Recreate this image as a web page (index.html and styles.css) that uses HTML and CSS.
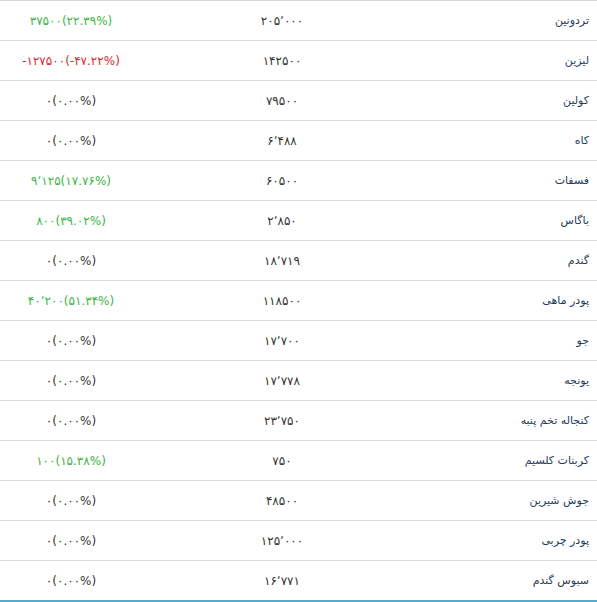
FILE: index.html
```html
<!DOCTYPE html>
<html lang="fa" dir="rtl">
<head>
<meta charset="utf-8">
<link rel="stylesheet" href="styles.css">
</head>
<body>
<table class="prices">
<colgroup><col class="c-name"><col class="c-price"><col class="c-change"></colgroup>
<tbody>
<tr><td class="name">تردونین</td><td class="price">۲۰۵٬۰۰۰</td><td class="change up"><span>۳۷۵۰۰(۲۲.۳۹%)</span></td></tr>
<tr><td class="name">لیزین</td><td class="price">۱۴۲۵۰۰</td><td class="change down"><span>-۱۲۷۵۰۰(-۴۷.۲۲%)</span></td></tr>
<tr><td class="name">کولین</td><td class="price">۷۹۵۰۰</td><td class="change"><span>۰(۰.۰۰%)</span></td></tr>
<tr><td class="name">کاه</td><td class="price">۶٬۴۸۸</td><td class="change"><span>۰(۰.۰۰%)</span></td></tr>
<tr><td class="name">فسفات</td><td class="price">۶۰۵۰۰</td><td class="change up"><span>۹٬۱۲۵(۱۷.۷۶%)</span></td></tr>
<tr><td class="name">باگاس</td><td class="price">۲٬۸۵۰</td><td class="change up"><span>۸۰۰(۳۹.۰۲%)</span></td></tr>
<tr><td class="name">گندم</td><td class="price">۱۸٬۷۱۹</td><td class="change"><span>۰(۰.۰۰%)</span></td></tr>
<tr><td class="name">پودر ماهی</td><td class="price">۱۱۸۵۰۰</td><td class="change up"><span>۴۰٬۲۰۰(۵۱.۳۴%)</span></td></tr>
<tr><td class="name">جو</td><td class="price">۱۷٬۷۰۰</td><td class="change"><span>۰(۰.۰۰%)</span></td></tr>
<tr><td class="name">یونجه</td><td class="price">۱۷٬۷۷۸</td><td class="change"><span>۰(۰.۰۰%)</span></td></tr>
<tr><td class="name">کنجاله تخم پنبه</td><td class="price">۲۳٬۷۵۰</td><td class="change"><span>۰(۰.۰۰%)</span></td></tr>
<tr><td class="name">کربنات کلسیم</td><td class="price">۷۵۰</td><td class="change up"><span>۱۰۰(۱۵.۳۸%)</span></td></tr>
<tr><td class="name">جوش شیرین</td><td class="price">۴۸۵۰۰</td><td class="change"><span>۰(۰.۰۰%)</span></td></tr>
<tr><td class="name">پودر چربی</td><td class="price">۱۲۵٬۰۰۰</td><td class="change"><span>۰(۰.۰۰%)</span></td></tr>
<tr><td class="name">سبوس گندم</td><td class="price">۱۶٬۷۷۱</td><td class="change"><span>۰(۰.۰۰%)</span></td></tr>
</tbody>
</table>
</body>
</html>
```
FILE: styles.css
```css
html, body {
  margin: 0;
  padding: 0;
  background: #ffffff;
}
body {
  font-family: "DejaVu Sans", Tahoma, sans-serif;
  font-size: 11px;
}
.prices {
  width: 597px;
  border-collapse: collapse;
  table-layout: fixed;
  border-top: 1px solid #d6d6d6;
  border-bottom: 2px solid #5aa9c9;
}
.c-name { width: 175px; }
.c-price { width: 280px; }
.c-change { width: 142px; }
.prices td {
  height: 39px;
  padding: 0;
  border-top: 1px solid #dcdcdc;
  vertical-align: middle;
}
.prices tr:first-child td {
  border-top: none;
}
.prices td.name {
  text-align: right;
  padding-right: 8px;
  color: #1e3b5a;
}
.price {
  text-align: center;
  color: #333333;
  font-size: 12px;
  letter-spacing: 1.6px;
}
.change {
  text-align: center;
  color: #333333;
  font-size: 12px;
  letter-spacing: 1.3px;
}
.change span {
  direction: ltr;
  unicode-bidi: embed;
  display: inline-block;
}
.up { color: #3cb543; }
.down { color: #e3262c; }
```
